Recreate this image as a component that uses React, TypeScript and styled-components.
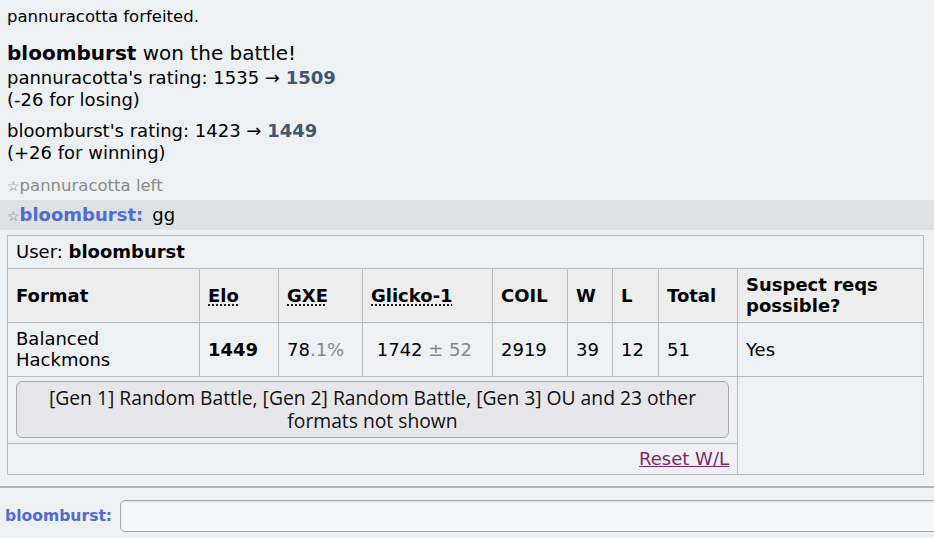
import React from 'react'
import styled, { createGlobalStyle } from 'styled-components'

const GlobalStyle = createGlobalStyle`
    html, body {
        margin: 0;
        padding: 0;
        background: #eef1f4;
        overflow: hidden;
    }
    body {
        font-family: "DejaVu Sans", Verdana, sans-serif;
        color: #000;
    }
`;

const Page = styled.div`
    width: 934px;
    height: 538px;
    display: flex;
    flex-direction: column;
    background: #eef1f4;
`;

const Log = styled.div`
    flex: 1;
    display: flex;
    flex-direction: column;
`;

const HistoryLine = styled.div<{ size?: number, gap?: number }>`
    padding: 0 7px;
    font-size: ${props => props.size || 18}px;
    line-height: ${props => Math.round((props.size || 18) * 1.215)}px;
    margin-top: ${props => props.gap || 0}px;
`;

const NewRating = styled.strong`
    color: #3f5770;
`;

const Muted = styled.div`
    padding: 0 7px;
    margin-top: 12px;
    font-size: 16.5px;
    line-height: 19px;
    color: #8a8a8a;
`;

const Star = styled.span`
    font-size: 14px;
    line-height: 1;
    color: #7a7a7a;
`;

const ChatLine = styled.div`
    margin-top: 5px;
    background: #dfe2e5;
    padding: 4px 7px;
    height: 22px;
    font-size: 18px;
    line-height: 22px;
`;

const ChatName = styled.strong`
    color: #4f6cd3;
    margin-right: 9px;
`;

const Table = styled.table`
    margin: 5px 10px 0 7px;
    width: 917px;
    border-collapse: collapse;
    font-size: 18px;
    line-height: 21px;

    td, th {
        border: 1px solid #bbbbbb;
        padding: 5px 8px 6px;
        text-align: left;
        vertical-align: middle;
    }
`;

const HeadCell = styled.th<{ w: number }>`
    width: ${props => props.w}px;
    background: #ededed;
    font-weight: bold;
`;

const Abbr = styled.abbr`
    text-decoration: underline dotted;
    text-underline-offset: 3px;
    cursor: help;
`;

const Faint = styled.span`
    color: #888;
`;

const ButtonCell = styled.td`
    padding: 4px 8px 5px !important;
`;

const MoreButton = styled.button`
    display: block;
    width: 100%;
    margin: 0;
    padding: 4px 20px 5px;
    background: #e7e7eb;
    border: 1px solid #a8a8ac;
    border-radius: 6px;
    font-family: "Open Sans", "Noto Sans", sans-serif;
    font-size: 19.3px;
    line-height: 23px;
    color: #111;
    text-align: center;
`;

const ResetCell = styled.td`
    text-align: right !important;
    padding: 4px 8px 5px !important;
`;

const ResetLink = styled.a`
    color: #7b2a6e;
    text-decoration: underline;
`;

const Composer = styled.div`
    margin-top: 11px;
    border-top: 2px solid #b3b5b8;
    display: flex;
    align-items: center;
    gap: 8px;
    padding: 12px 0 0 5px;
`;

const ComposerName = styled.strong`
    color: #4f6cd3;
    font-size: 15.6px;
`;

const Input = styled.div`
    flex: 1;
    height: 30px;
    margin-right: -20px;
    background: #f6f9fc;
    border: 1px solid #a8aaad;
    border-radius: 5px;
    box-shadow: inset 0 1px 2px rgba(0,0,0,0.12);
`;

const columns: [React.ReactNode, number][] = [
    ['Format', 175],
    [<Abbr>Elo</Abbr>, 62],
    [<Abbr>GXE</Abbr>, 67],
    [<Abbr>Glicko-1</Abbr>, 113],
    ['COIL', 58],
    ['W', 28],
    ['L', 29],
    ['Total', 62],
    ['Suspect reqs possible?', 169],
];

export default function App() {
    return (
        <Page>
            <GlobalStyle />
            <Log>
                <HistoryLine size={16.5} gap={7}>pannuracotta forfeited.</HistoryLine>
                <HistoryLine size={20} gap={14}><strong>bloomburst</strong> won the battle!</HistoryLine>
                <HistoryLine gap={2}>pannuracotta's rating: 1535 → <NewRating>1509</NewRating><br />(-26 for losing)</HistoryLine>
                <HistoryLine gap={9}>bloomburst's rating: 1423 → <NewRating>1449</NewRating><br />(+26 for winning)</HistoryLine>
                <Muted><Star>☆</Star>pannuracotta left</Muted>
                <ChatLine><Star>☆</Star><ChatName>bloomburst:</ChatName>gg</ChatLine>
                <Table>
                    <tbody>
                        <tr>
                            <td colSpan={9}>User: <strong>bloomburst</strong></td>
                        </tr>
                        <tr>
                            {columns.map(([label, w], i) => (
                                <HeadCell key={i} w={w}>{label}</HeadCell>
                            ))}
                        </tr>
                        <tr>
                            <td>Balanced Hackmons</td>
                            <td><strong>1449</strong></td>
                            <td>78<Faint>.1%</Faint></td>
                            <td>&nbsp;1742<Faint> ± 52</Faint></td>
                            <td>2919</td>
                            <td>39</td>
                            <td>12</td>
                            <td>51</td>
                            <td>Yes</td>
                        </tr>
                        <tr>
                            <ButtonCell colSpan={8}>
                                <MoreButton>[Gen 1] Random Battle, [Gen 2] Random Battle, [Gen 3] OU and 23 other formats not shown</MoreButton>
                            </ButtonCell>
                            <td rowSpan={2}></td>
                        </tr>
                        <tr>
                            <ResetCell colSpan={8}><ResetLink href="#">Reset W/L</ResetLink></ResetCell>
                        </tr>
                    </tbody>
                </Table>
                <Composer>
                    <ComposerName>bloomburst:</ComposerName>
                    <Input />
                </Composer>
            </Log>
        </Page>
    );
}
